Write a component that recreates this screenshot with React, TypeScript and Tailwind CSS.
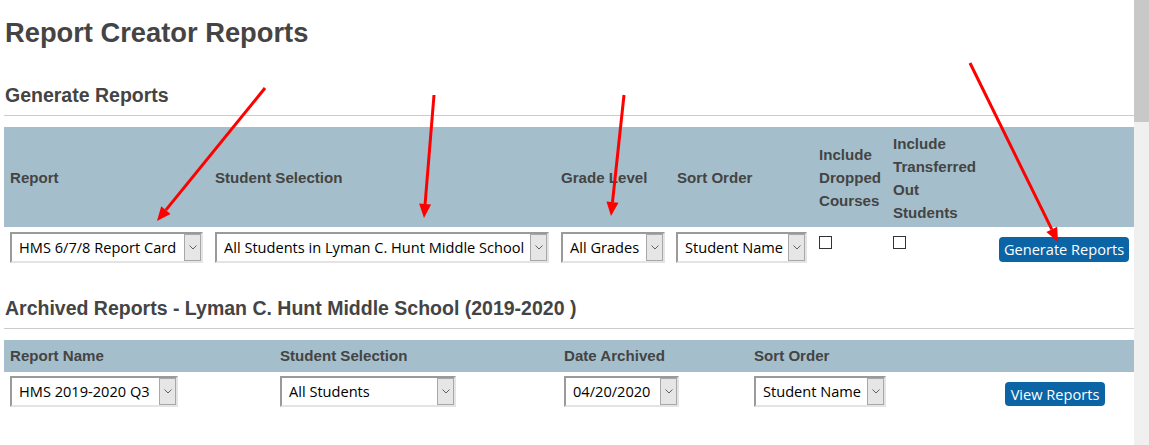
import React from "react";

function Chevron() {
  return (
    <svg width="8" height="5" viewBox="0 0 8 5" className="block">
      <path d="M0.5 0.5 L4 4 L7.5 0.5" fill="none" stroke="#606060" strokeWidth="1" />
    </svg>
  );
}

function Select({ className, text }: { className: string; text: string }) {
  return (
    <div
      className={
        "flex h-[31px] border-2 border-t-[#9a9a9a] border-l-[#9a9a9a] border-b-[#e4e4e4] border-r-[#e4e4e4] bg-white " +
        className
      }
    >
      <div className="flex flex-1 items-center overflow-hidden whitespace-nowrap pl-[7px] text-[14.6px] text-black [font-family:'Open_Sans',sans-serif]">
        {text}
      </div>
      <div className="flex h-full w-[17px] items-center justify-center border border-[#a8a8a8] bg-[#e6e6e6]">
        <Chevron />
      </div>
    </div>
  );
}

function Checkbox() {
  return <div className="mt-[4px] h-[13px] w-[13px] border border-[#333] bg-white" />;
}

function Arrow({ x1, y1, x2, y2, pts }: { x1: number; y1: number; x2: number; y2: number; pts: string }) {
  return (
    <g>
      <line x1={x1} y1={y1} x2={x2} y2={y2} stroke="#ff0000" strokeWidth="3" />
      <polygon points={pts} fill="#ff0000" />
    </g>
  );
}

export default function App() {
  return (
    <div className="relative flex h-[445px] w-[1149px] overflow-hidden bg-white [font-family:'Liberation_Sans',Arial,sans-serif]">
      <main className="flex w-[1134px] flex-col pl-[4px]">
        <h1 className="mt-[17px] ml-[1px] text-[27.3px] font-bold leading-[32px] text-[#444]">
          Report Creator Reports
        </h1>
        <h2 className="mt-[34px] ml-[1px] text-[19.5px] font-bold leading-[24px] text-[#444]">
          Generate Reports
        </h2>
        <div className="mt-[8px] h-px bg-[#cccccc]" />

        <div className="mt-[11px] grid h-[100px] grid-cols-[205px_346px_116px_142px_74px_96px_151px] items-center bg-[#a4bfcb] pt-[1px] text-[15.1px] font-bold leading-[23px] text-[#444]">
          <div className="px-[6px]">Report</div>
          <div className="px-[6px]">Student Selection</div>
          <div className="px-[6px]">Grade Level</div>
          <div className="px-[6px]">Sort Order</div>
          <div className="whitespace-nowrap px-[6px]">
            Include<br />Dropped<br />Courses
          </div>
          <div className="whitespace-nowrap px-[6px]">
            Include<br />Transferred<br />Out<br />Students
          </div>
          <div className="px-[6px]" />
        </div>

        <div className="grid grid-cols-[205px_346px_116px_142px_74px_96px_151px] items-start pt-[5px]">
          <div className="px-[6px]">
            <Select className="w-[193px]" text="HMS 6/7/8 Report Card" />
          </div>
          <div className="px-[6px]">
            <Select className="w-[334px]" text="All Students in Lyman C. Hunt Middle School" />
          </div>
          <div className="px-[6px]">
            <Select className="w-[104px]" text="All Grades" />
          </div>
          <div className="px-[5px]">
            <Select className="w-[131px]" text="Student Name" />
          </div>
          <div className="px-[6px]">
            <Checkbox />
          </div>
          <div className="px-[6px]">
            <Checkbox />
          </div>
          <div className="px-[6px]">
            <button className="mt-[5px] ml-[10px] flex h-[25px] w-[130px] items-center justify-center rounded-[4px] bg-[#0a64a5] pt-[1px] text-[14.6px] text-white [font-family:'Open_Sans',sans-serif]">
              Generate Reports
            </button>
          </div>
        </div>

        <h2 className="mt-[33px] ml-[1px] text-[19.5px] font-bold leading-[24px] text-[#444]">
          Archived Reports - Lyman C. Hunt Middle School (2019-2020 )
        </h2>
        <div className="mt-[8px] h-px bg-[#cccccc]" />

        <div className="mt-[11px] grid h-[32px] grid-cols-[270px_284px_190px_251px_135px] items-center bg-[#a4bfcb] pt-[1px] text-[15.1px] font-bold text-[#444]">
          <div className="px-[6px]">Report Name</div>
          <div className="px-[6px]">Student Selection</div>
          <div className="px-[6px]">Date Archived</div>
          <div className="px-[6px]">Sort Order</div>
          <div className="px-[6px]" />
        </div>

        <div className="grid grid-cols-[270px_284px_190px_251px_135px] items-start pt-[4px]">
          <div className="px-[6px]">
            <Select className="w-[168px]" text="HMS 2019-2020 Q3" />
          </div>
          <div className="px-[6px]">
            <Select className="w-[176px]" text="All Students" />
          </div>
          <div className="px-[6px]">
            <Select className="w-[115px]" text="04/20/2020" />
          </div>
          <div className="px-[6px]">
            <Select className="w-[132px]" text="Student Name" />
          </div>
          <div className="px-[6px]">
            <button className="mt-[6px] flex h-[24px] w-[100px] items-center justify-center rounded-[4px] bg-[#0a64a5] pt-[1px] text-[14.6px] text-white [font-family:'Open_Sans',sans-serif]">
              View Reports
            </button>
          </div>
        </div>
      </main>

      <aside className="flex w-[15px] flex-col bg-[#f0f0f0]">
        <div className="h-[122px] bg-[#c8c8c8]" />
      </aside>

      <svg className="pointer-events-none absolute inset-0" width="1149" height="445" viewBox="0 0 1149 445">
        <Arrow x1={265} y1={88} x2={165.8} y2={210.1} pts="157,221 161.2,206.3 170.5,213.9" />
        <Arrow x1={434} y1={95} x2={425.1} y2={204} pts="424,218 419.1,203.5 431.1,204.5" />
        <Arrow x1={624} y1={95} x2={612.5} y2={202.1} pts="611,216 606.5,201.4 618.5,202.7" />
        <Arrow x1={970} y1={63} x2={1051.8} y2={229.4} pts="1058,242 1046.4,232.1 1057.2,226.8" />
      </svg>
    </div>
  );
}
